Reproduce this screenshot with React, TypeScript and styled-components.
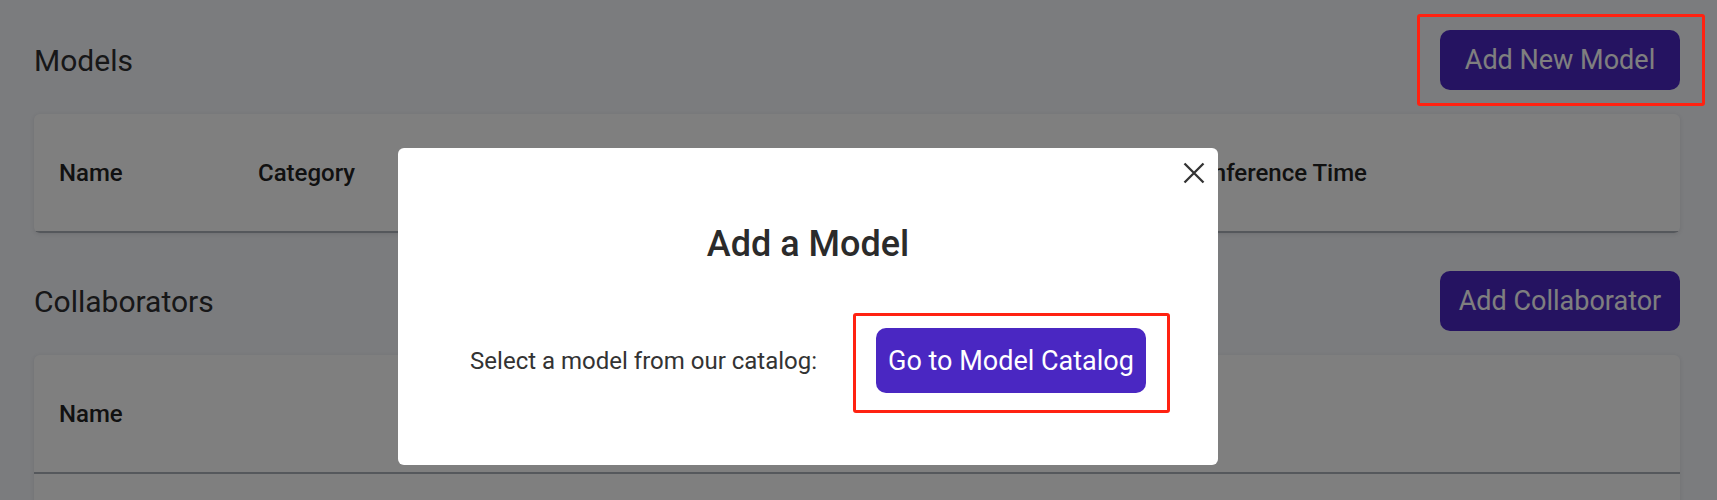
import React from 'react';
import styled, { createGlobalStyle } from 'styled-components';

const GlobalStyle = createGlobalStyle`
  html, body {
    margin: 0;
    padding: 0;
    background: #f6f8fc;
    font-family: Roboto, "Liberation Sans", Arial, sans-serif;
    overflow: hidden;
  }
  * {
    box-sizing: border-box;
  }
`;

const Page = styled.main`
  display: flex;
  flex-direction: column;
  padding: 30px 37px 0 34px;
  height: 500px;
`;

const Section = styled.section`
  display: flex;
  flex-direction: column;
  margin-bottom: 38px;
`;

const SectionHeader = styled.div`
  display: flex;
  justify-content: space-between;
  align-items: center;
  height: 60px;
  margin-bottom: 24px;
`;

const SectionTitle = styled.h2`
  margin: 0;
  font-size: 30px;
  font-weight: 400;
  color: #2e2e30;
`;

const PrimaryButton = styled.button<{ $width?: number; $height?: number; $pad?: number }>`
  display: inline-flex;
  align-items: center;
  justify-content: center;
  width: ${p => (p.$width ? `${p.$width}px` : 'auto')};
  height: ${p => p.$height ?? 60}px;
  padding: 0 ${p => p.$pad ?? 0}px;
  border: none;
  border-radius: 10px;
  background: #4a27c2;
  color: #ffffff;
  font-family: Roboto, "Liberation Sans", Arial, sans-serif;
  font-size: 27px;
  font-weight: 400;
  cursor: pointer;
  white-space: nowrap;
`;

const Card = styled.div`
  background: #ffffff;
  border-radius: 6px;
  overflow: hidden;
  box-shadow: 0 1px 4px rgba(40, 40, 60, 0.12);
`;

const HeaderRow = styled.div<{ $columns: string }>`
  display: grid;
  grid-template-columns: ${p => p.$columns};
  align-items: center;
  height: 119px;
  padding-left: 25px;
  border-bottom: 2px solid #aab0b8;
`;

const HeaderCell = styled.div`
  font-size: 24px;
  font-weight: 500;
  color: #232323;
  white-space: nowrap;
`;

const EmptyRow = styled.div`
  height: 80px;
`;

const Backdrop = styled.div`
  position: fixed;
  inset: 0;
  background: rgba(0, 0, 0, 0.5);
`;

const Dialog = styled.div`
  position: fixed;
  left: 398px;
  top: 148px;
  width: 820px;
  height: 317px;
  display: flex;
  flex-direction: column;
  align-items: center;
  padding-top: 74px;
  background: #ffffff;
  border-radius: 6px;
`;

const CloseButton = styled.button`
  position: absolute;
  top: 13px;
  right: 12px;
  width: 24px;
  height: 24px;
  padding: 0;
  display: flex;
  align-items: center;
  justify-content: center;
  border: none;
  background: transparent;
  color: #333333;
  cursor: pointer;
`;

const DialogTitle = styled.h3`
  margin: 0;
  font-size: 36px;
  line-height: 44px;
  font-weight: 500;
  color: #2b2b2b;
`;

const DialogRow = styled.div`
  display: flex;
  align-items: center;
  gap: 59px;
  margin-top: 62px;
`;

const DialogText = styled.span`
  font-size: 24px;
  color: #333333;
`;

const Highlight = styled.div<{ $x: number; $y: number; $w: number; $h: number }>`
  position: fixed;
  left: ${p => p.$x}px;
  top: ${p => p.$y}px;
  width: ${p => p.$w}px;
  height: ${p => p.$h}px;
  border: 3px solid #ff2211;
  border-radius: 3px;
  pointer-events: none;
`;

const modelColumns = '199px 316px 316px 316px 1fr';

const App: React.FC = () => {
  return (
    <>
      <GlobalStyle />
      <Page>
        <Section>
          <SectionHeader>
            <SectionTitle>Models</SectionTitle>
            <PrimaryButton $width={240}>Add New Model</PrimaryButton>
          </SectionHeader>
          <Card>
            <HeaderRow $columns={modelColumns}>
              <HeaderCell>Name</HeaderCell>
              <HeaderCell>Category</HeaderCell>
              <HeaderCell>Description</HeaderCell>
              <HeaderCell>Accuracy</HeaderCell>
              <HeaderCell>Inference Time</HeaderCell>
            </HeaderRow>
          </Card>
        </Section>

        <Section>
          <SectionHeader>
            <SectionTitle>Collaborators</SectionTitle>
            <PrimaryButton $width={240}>Add Collaborator</PrimaryButton>
          </SectionHeader>
          <Card>
            <HeaderRow $columns="1fr">
              <HeaderCell>Name</HeaderCell>
            </HeaderRow>
            <EmptyRow />
          </Card>
        </Section>
      </Page>

      <Backdrop />
      <Dialog role="dialog">
        <CloseButton aria-label="Close">
          <svg width="22" height="22" viewBox="0 0 22 22">
            <path d="M1.5 1.5 L20.5 20.5 M20.5 1.5 L1.5 20.5" stroke="currentColor" strokeWidth="2.3" />
          </svg>
        </CloseButton>
        <DialogTitle>Add a Model</DialogTitle>
        <DialogRow>
          <DialogText>Select a model from our catalog:</DialogText>
          <PrimaryButton $height={65} $pad={12}>Go to Model Catalog</PrimaryButton>
        </DialogRow>
      </Dialog>

      <Highlight $x={1417} $y={14} $w={288} $h={92} />
      <Highlight $x={853} $y={313} $w={317} $h={100} />
    </>
  );
};

export default App;
